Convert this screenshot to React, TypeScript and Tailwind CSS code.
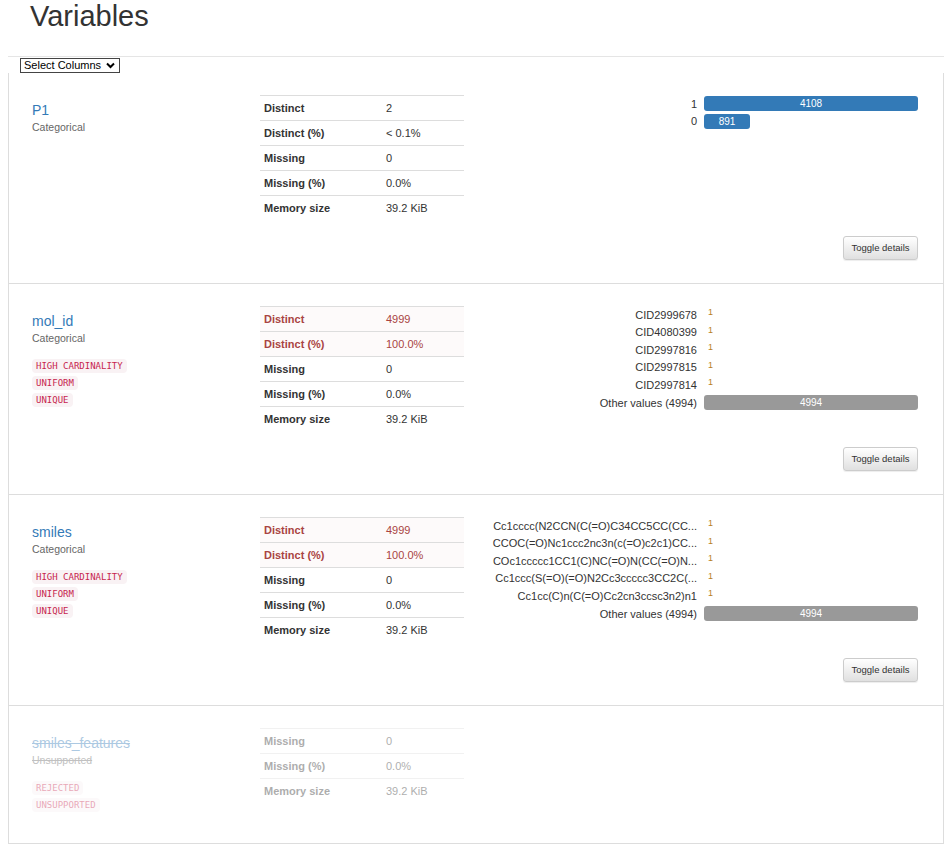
import React from 'react';

type Freq = { label: string; count: number; other?: boolean };

interface VariableProps {
    name: string;
    type: string;
    badges?: string[];
    alertRows?: number;
    rows: [string, string][];
    freqs?: Freq[];
    maxCount?: number;
    rejected?: boolean;
}

const Badge = ({ text }: { text: string }) => (
    <span className="inline-block h-[14px] rounded-[4px] bg-[#f9f2f4] px-[4px] font-['DejaVu_Sans_Mono',monospace] text-[9px] leading-[14px] text-[#c7254e]">
        {text}
    </span>
);

const FreqRow = ({ freq, maxCount }: { freq: Freq; maxCount: number }) => {
    const width = Math.round((freq.count / maxCount) * 214);
    const showBar = freq.other || width > 20;
    return (
        <div className="flex h-[17.6px] items-center">
            <div className="w-[233px] whitespace-nowrap text-right text-[11px] text-[#333]">{freq.label}</div>
            <div className="ml-[7px] flex w-[214px] items-center">
                {showBar ? (
                    <div
                        className={`flex h-[15px] items-center justify-center rounded-[3px] text-[10px] text-white ${freq.other ? 'bg-[#999]' : 'bg-[#337ab7]'}`}
                        style={{ width: freq.other ? 214 : width }}
                    >
                        {freq.count}
                    </div>
                ) : (
                    <span className="ml-[4px] -mt-[4px] text-[9px] text-[#b8801f]">{freq.count}</span>
                )}
            </div>
        </div>
    );
};

const Variable: React.FC<VariableProps> = ({ name, type, badges, alertRows = 0, rows, freqs, maxCount = 1, rejected }) => {
    return (
        <div className={`border-b border-[#ddd] pl-[23px] pr-[25px] pt-[22px] ${rejected ? 'pb-[31px]' : 'pb-[23px]'}`}>
            <div className={`flex items-start ${rejected ? 'opacity-40' : ''}`}>
                <div className="w-[228px]">
                    <div className={`mt-[5px] text-[14px] leading-[20px] text-[#337ab7] ${rejected ? 'line-through' : ''}`}>{name}</div>
                    <div className={`text-[10.5px] leading-[15px] text-[#666] ${rejected ? 'line-through' : ''}`}>{type}</div>
                    {badges && (
                        <div className="mt-[13px] flex flex-col items-start gap-[3px]">
                            {badges.map((b) => (
                                <Badge key={b} text={b} />
                            ))}
                        </div>
                    )}
                </div>
                <div className="w-[204px] text-[11px]">
                    {rows.map(([k, v], i) => (
                        <div
                            key={k}
                            className={`flex h-[25px] items-center border-t border-[#ddd] ${i < alertRows ? 'bg-[#fdfafa] text-[#a94442]' : 'text-[#333]'}`}
                        >
                            <div className="w-[122px] pl-[4px] font-bold">{k}</div>
                            <div className="pl-[4px]">{v}</div>
                        </div>
                    ))}
                </div>
                {freqs && (
                    <div className="flex flex-1 flex-col">
                        {freqs.map((f) => (
                            <FreqRow key={f.label} freq={f} maxCount={maxCount} />
                        ))}
                    </div>
                )}
            </div>
            {!rejected && (
                <div className="mt-[16px] flex justify-end">
                    <button className="h-[24px] w-[75px] rounded-[3px] border border-[#ccc] bg-linear-to-b from-white to-[#e0e0e0] text-[9.5px] text-[#333] shadow-[0_1px_1px_rgba(0,0,0,0.075)]">
                        Toggle details
                    </button>
                </div>
            )}
        </div>
    );
};

const stats = (alert: boolean): [string, string][] => [
    ['Distinct', alert ? '4999' : '2'],
    ['Distinct (%)', alert ? '100.0%' : '< 0.1%'],
    ['Missing', '0'],
    ['Missing (%)', '0.0%'],
    ['Memory size', '39.2 KiB'],
];

export default function App() {
    return (
        <div className="min-h-screen bg-white font-['Liberation_Sans',Arial,sans-serif] text-[#333]">
            <div className="mx-[8px] h-[57px] border-b border-[#e5e5e5] pl-[22px]">
                <h1 className="text-[29px] leading-[32px] text-[#333]">Variables</h1>
            </div>
            <div className="ml-[20px] mt-[1px] flex h-[15px] w-[100px] items-center border border-[#444] pl-[3px] text-[11px] text-black">
                <span>Select Columns</span>
                <svg className="ml-[5px]" width="9" height="7" viewBox="0 0 9 7">
                    <polyline points="1,1.5 4.5,5 8,1.5" fill="none" stroke="#000" strokeWidth="2" />
                </svg>
            </div>
            <div className="mx-[8px] border-x border-[#ddd]">
                <Variable
                    name="P1"
                    type="Categorical"
                    rows={stats(false)}
                    maxCount={4108}
                    freqs={[
                        { label: '1', count: 4108 },
                        { label: '0', count: 891 },
                    ]}
                />
                <Variable
                    name="mol_id"
                    type="Categorical"
                    badges={['HIGH CARDINALITY', 'UNIFORM', 'UNIQUE']}
                    alertRows={2}
                    rows={stats(true)}
                    maxCount={4994}
                    freqs={[
                        { label: 'CID2999678', count: 1 },
                        { label: 'CID4080399', count: 1 },
                        { label: 'CID2997816', count: 1 },
                        { label: 'CID2997815', count: 1 },
                        { label: 'CID2997814', count: 1 },
                        { label: 'Other values (4994)', count: 4994, other: true },
                    ]}
                />
                <Variable
                    name="smiles"
                    type="Categorical"
                    badges={['HIGH CARDINALITY', 'UNIFORM', 'UNIQUE']}
                    alertRows={2}
                    rows={stats(true)}
                    maxCount={4994}
                    freqs={[
                        { label: 'Cc1cccc(N2CCN(C(=O)C34CC5CC(CC...', count: 1 },
                        { label: 'CCOC(=O)Nc1ccc2nc3n(c(=O)c2c1)CC...', count: 1 },
                        { label: 'COc1ccccc1CC1(C)NC(=O)N(CC(=O)N...', count: 1 },
                        { label: 'Cc1ccc(S(=O)(=O)N2Cc3ccccc3CC2C(...', count: 1 },
                        { label: 'Cc1cc(C)n(C(=O)Cc2cn3ccsc3n2)n1', count: 1 },
                        { label: 'Other values (4994)', count: 4994, other: true },
                    ]}
                />
                <Variable
                    name="smiles_features"
                    type="Unsupported"
                    badges={['REJECTED', 'UNSUPPORTED']}
                    rows={[
                        ['Missing', '0'],
                        ['Missing (%)', '0.0%'],
                        ['Memory size', '39.2 KiB'],
                    ]}
                    rejected
                />
            </div>
        </div>
    );
}
